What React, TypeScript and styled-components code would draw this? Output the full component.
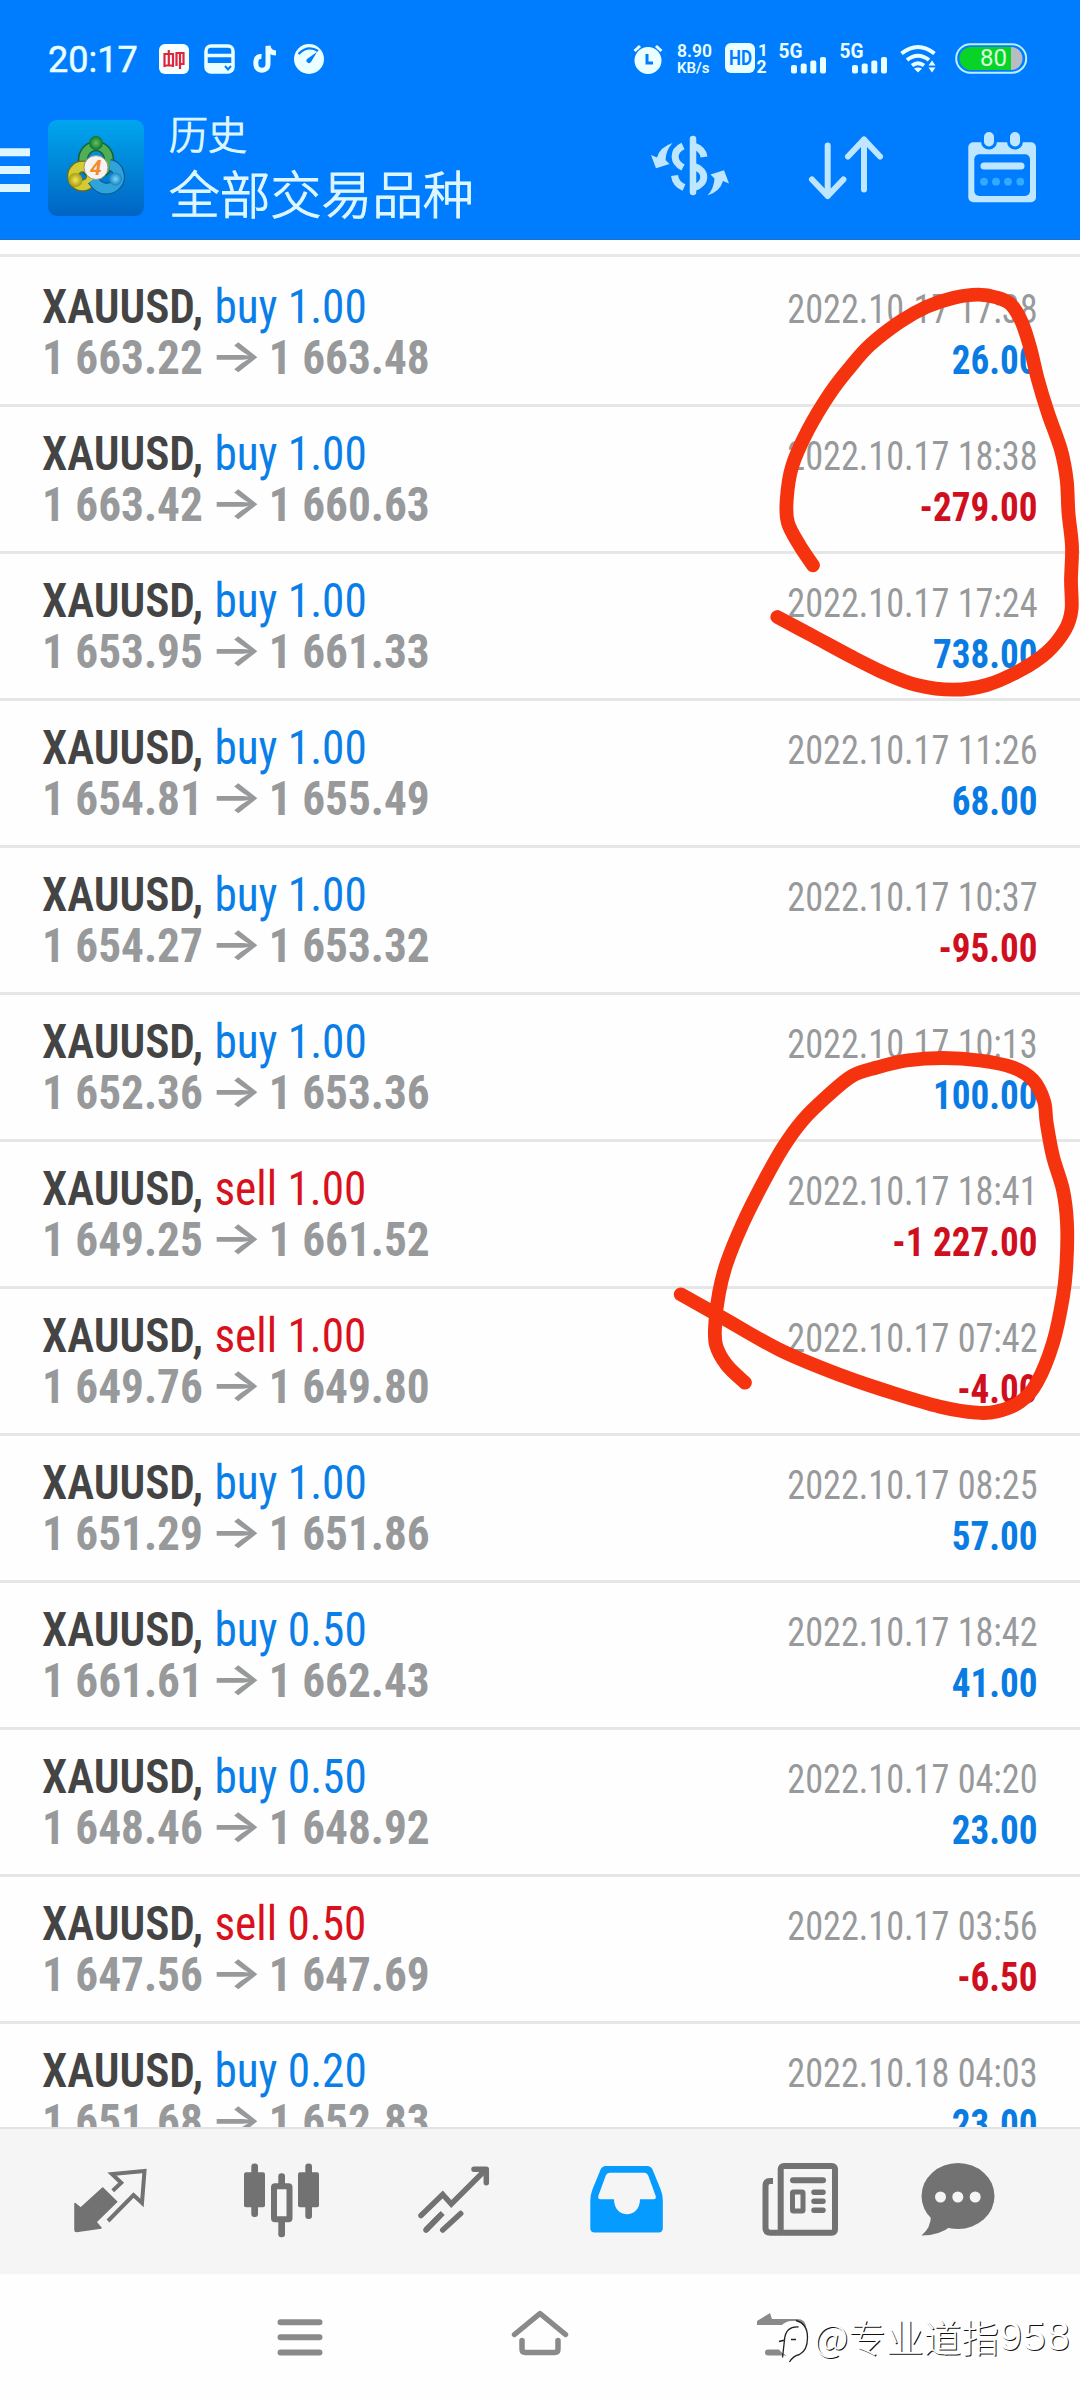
import React from "react";
import styled, { createGlobalStyle } from "styled-components";

const GlobalStyle = createGlobalStyle`
  * { box-sizing: border-box; }
  body { margin: 0; background: #fff; }
  svg { display: block; flex: none; overflow: visible; }
`;

const BLUE = "#007dff";
const ICE = "#def6ff";
const ICON = "#bfe6ff";
const GRAY = "#727272";
const NAV_GRAY = "#8a8a8a";

const Screen = styled.div`
  position: relative;
  width: 1080px;
  height: 2400px;
  overflow: hidden;
  display: flex;
  flex-direction: column;
  background: #fefefe;
  font-family: Roboto, "Noto Sans CJK SC", sans-serif;
`;

const Header = styled.header`
  height: 240px;
  flex: none;
  display: flex;
  flex-direction: column;
  background: ${BLUE};
  border-bottom: 1px solid #1a72cc;
`;

const StatusBar = styled.div`
  height: 117px;
  padding: 0 52px 0 48px;
  display: flex;
  align-items: center;
  justify-content: space-between;
  color: #eaffff;
`;

const StatusGroup = styled.div<{ $gap: number }>`
  display: flex;
  align-items: center;
  gap: ${(p) => p.$gap}px;
`;

const Clock = styled.span`
  width: 94px;
  margin-right: 2px;
  font-size: 36px;
  line-height: 42px;
  padding-top: 2px;
  -webkit-text-stroke: 0.5px #eaffff;
`;

const NetSpeed = styled.div`
  width: 36px;
  height: 34px;
  margin-right: -1px;
  display: flex;
  flex-direction: column;
  justify-content: space-between;
  font-weight: 600;
  white-space: nowrap;
`;

const SpeedValue = styled.span`
  font-size: 17.5px;
  line-height: 18px;
`;

const SpeedUnit = styled.span`
  font-size: 15px;
  line-height: 16px;
`;

const Toolbar = styled.div`
  flex: 1;
  display: flex;
  align-items: flex-start;
`;

const Titles = styled.div`
  width: 452px;
  margin-top: -4px;
  padding-left: 24px;
  display: flex;
  flex-direction: column;
  color: ${ICE};
  font-family: "Noto Sans CJK SC", sans-serif;
  font-weight: 300;
  -webkit-text-stroke: 1.1px ${ICE};
`;

const Subtitle = styled.span`
  font-size: 39px;
  line-height: 38px;
`;

const Title = styled.span`
  font-size: 50.8px;
  line-height: 60px;
  margin-top: 11px;
`;

const List = styled.main`
  height: 1887px;
  flex: none;
  overflow: hidden;
  background: #fefefe;
`;

const PreviousRow = styled.div`
  height: 17px;
  margin-bottom: 3px;
  border-bottom: 3px solid #e8e8e8;
`;

const Row = styled.div`
  height: 147px;
  border-bottom: 3px solid #e6e6e6;
  padding: 21px 42px 0 42px;
  display: flex;
  justify-content: space-between;
  font-stretch: 75%;
  white-space: nowrap;
`;

const Deal = styled.div`
  width: 430px;
  transform: scaleX(0.943);
  transform-origin: left;
  font-size: 48px;
  line-height: 51px;
`;

const Result = styled.div`
  padding-top: 3px;
  transform: scaleX(0.905);
  transform-origin: right;
  font-size: 40px;
  line-height: 51px;
  text-align: right;
`;

const Symbol = styled.div`
  font-weight: 620;
  color: #444;
`;

const Side = styled.span<{ $sell: boolean }>`
  margin-left: 1px;
  font-weight: 440;
  color: ${(p) => (p.$sell ? "#d9111c" : "#0a7ee8")};
`;

const Prices = styled.div`
  display: flex;
  font-weight: 700;
  color: #97999b;
`;

const Arrow = styled.span`
  width: 70px;
  height: 51px;
  flex: none;
  display: flex;
  justify-content: center;
  transform: scaleX(1.34);
  font-family: Inter, sans-serif;
  font-size: 44px;
  line-height: 47px;
  font-stretch: 100%;
  font-weight: 600;
`;

const Time = styled.div`
  color: #97999b;
`;

const Profit = styled.div<{ $loss: boolean }>`
  transform: scaleX(1.025);
  transform-origin: right;
  font-weight: 700;
  color: ${(p) => (p.$loss ? "#d00f1e" : "#0a7be2")};
`;

const TabBar = styled.nav`
  height: 147px;
  flex: none;
  display: flex;
  background: #f5f5f5;
  border-top: 2px solid #e2e2e2;
`;

const SystemNav = styled.footer`
  height: 126px;
  flex: none;
  display: flex;
  padding: 0 180px;
  background: #fefefe;
`;

const Marker = styled.svg`
  position: absolute;
  left: 0;
  top: 0;
  pointer-events: none;
`;

const Watermark = styled.div`
  position: absolute;
  left: 775px;
  top: 2312px;
  height: 52px;
  display: flex;
  align-items: center;
  color: #fff;
  font-family: "Noto Sans CJK SC", sans-serif;
  font-weight: 300;
  font-size: 37.7px;
  line-height: 52px;
  white-space: nowrap;
  text-shadow: 1px 1px 0 #111;
`;

const WatermarkText = styled.span`
  margin: -5px 0 0 4px;
`;

const WatermarkDigits = styled.span`
  margin: -5px 0 0 0;
  font-family: "Liberation Sans", sans-serif;
  font-size: 41px;
  letter-spacing: 1px;
`;

type Box = { x: number; y: number; w: number; h: number; children: React.ReactNode };

const Icon = ({ x, y, w, h, children }: Box) => (
  <svg width={w} height={h} viewBox={`${x} ${y} ${w} ${h}`} fill="none">
    {children}
  </svg>
);

const Signal = () => (
  <svg width="47" height="31" viewBox="0 0 47 31" fill="#eaffff">
    <text x="-0.5" y="14.5" fontSize="20" fontWeight="700" fontFamily="Roboto, sans-serif" textLength="24" lengthAdjust="spacingAndGlyphs">5G</text>
    <rect x="12" y="22" width="6" height="8.5" rx="2" />
    <rect x="21.7" y="20.5" width="6" height="10" rx="2" />
    <rect x="31.3" y="17.5" width="6" height="13" rx="2" />
    <rect x="41" y="14" width="6" height="16.5" rx="2" />
  </svg>
);

const StatusIcons = () => (
  <StatusBar>
    <StatusGroup $gap={15}>
      <Clock>20:17</Clock>
      <svg width="30" height="30" viewBox="0 0 30 30" fill="none">
        <rect width="30" height="30" rx="6" fill="#f8ffff" />
        <path d="M5.500 9v14M5.500 10h9M5.500 21.500h9M14 9v14M9.800 6v15.500M17.500 8v14M17.500 9h7v11h-3M21 8v17" stroke="#e0263c" strokeWidth="2.200" />
      </svg>
      <svg width="31" height="30" viewBox="0 0 31 30" fill="none">
        <rect x="2" y="2" width="27" height="26" rx="5" stroke="#eaffff" strokeWidth="3.500" />
        <path d="M2 11.500h27" stroke="#eaffff" strokeWidth="3.500" />
        <path d="M2 19h27v9H4z" fill="#eaffff" />
        <path d="M21 22l3 3.500 3-3.500" stroke={BLUE} strokeWidth="2" />
      </svg>
      <svg width="29" height="30" viewBox="0 0 29 30" fill="none">
        <path d="M11.500 12.500C6 12 5.500 17 6 21c.5 7 12 7 12-.5V2c.7 4.500 3.500 7 8 7" stroke="#eaffff" strokeWidth="5" />
      </svg>
      <svg width="30" height="30" viewBox="0 0 30 30" fill="none">
        <circle cx="15" cy="15" r="15" fill="#eaffff" />
        <path d="M4.500 10Q14 .5 24 7" stroke={BLUE} strokeWidth="2.200" />
        <path d="M23 8L13 15a2.500 2.500 0 1 0 4 3z" fill={BLUE} />
      </svg>
    </StatusGroup>
    <StatusGroup $gap={13.2}>
      <svg width="31" height="30" viewBox="0 0 31 30" fill="none">
        <circle cx="15" cy="16.500" r="13.500" fill="#eaffff" />
        <path d="M1.500 7L7 2M28.500 7L23 2" stroke="#eaffff" strokeWidth="3" />
        <path d="M14 10v9h6" stroke={BLUE} strokeWidth="3" />
      </svg>
      <NetSpeed>
        <SpeedValue>8.90</SpeedValue>
        <SpeedUnit>KB/s</SpeedUnit>
      </NetSpeed>
      <svg width="41" height="31" viewBox="0 0 41 31" fontFamily="Roboto, sans-serif" fontWeight="700">
        <rect width="30" height="30" rx="6" fill="#eaffff" />
        <text x="4" y="22" fontSize="19.500" fill={BLUE} textLength="23" lengthAdjust="spacingAndGlyphs">HD</text>
        <text x="33" y="12.500" fontSize="17" fill="#eaffff">1</text>
        <text x="31.500" y="30" fontSize="17.500" fill="#eaffff">2</text>
      </svg>
      <Signal />
      <Signal />
      <svg width="42" height="29" viewBox="0 0 42 29" fill="none" stroke="#eaffff" strokeWidth="4">
        <path d="M1.500 9.500Q18 -3.500 34.500 9.500M7 16Q18 7.500 29 16M12 21.500Q18 17 24 21.500" />
        <path d="M14 24.500q4-2 8 0L18 28.500z" fill="#eaffff" stroke="none" />
        <path d="M28.500 21.500l3.500-5 3.500 5zM28.500 23.500l3.500 5 3.500-5z" fill="#eaffff" stroke="none" />
      </svg>
      <svg width="73" height="31" viewBox="0 0 73 31">
        <defs>
          <clipPath id="cell"><rect x="4.500" y="4" width="63" height="23" rx="11.500" /></clipPath>
        </defs>
        <rect x="1.200" y="1.200" width="70" height="28.500" rx="14.200" fill="none" stroke="#bfefff" strokeWidth="2" />
        <g clipPath="url(#cell)">
          <rect x="4" y="3" width="52" height="26" fill="#0ad327" />
          <rect x="56" y="3" width="13" height="26" fill="#b9bcc2" />
        </g>
        <text x="25" y="22.500" fontSize="24" fill="#d8ffe2" fontFamily="Roboto, sans-serif" textLength="27" lengthAdjust="spacingAndGlyphs">80</text>
      </svg>
    </StatusGroup>
  </StatusBar>
);

const Logo = () => (
  <Icon x={48} y={117} w={97} h={100}>
    <defs>
      <linearGradient id="tile" x1="0" y1="0" x2="0" y2="1">
        <stop offset="0" stopColor="#00a6ee" />
        <stop offset="0.5" stopColor="#0085d8" />
        <stop offset="1" stopColor="#0064c4" />
      </linearGradient>
      <radialGradient id="green"><stop offset="0" stopColor="#5fc468" /><stop offset="1" stopColor="#12732b" /></radialGradient>
      <radialGradient id="yellow"><stop offset="0" stopColor="#f4e95a" /><stop offset="1" stopColor="#a89a10" /></radialGradient>
      <radialGradient id="cyan"><stop offset="0" stopColor="#7fd6f8" /><stop offset="1" stopColor="#1583c4" /></radialGradient>
    </defs>
    <rect x="48" y="120" width="96" height="96" rx="9" fill="url(#tile)" />
    <ellipse cx="96" cy="160" rx="13" ry="14" stroke="#14642a" strokeWidth="10.500" />
    <ellipse cx="96" cy="160" rx="13" ry="14" stroke="#4fae57" strokeWidth="7.500" />
    <circle cx="82.500" cy="176" r="9.500" stroke="#6f6d12" strokeWidth="12" />
    <circle cx="82.500" cy="176" r="9.500" stroke="#d3cb34" strokeWidth="9.500" />
    <path d="M93 180q8 12 19 7.500q11-6 5-18q-3-4-7-4.500" stroke="#0c5c96" strokeWidth="12" />
    <path d="M93 180q8 12 19 7.500q11-6 5-18q-3-4-7-4.500" stroke="#2fa3da" strokeWidth="9.500" />
    <circle cx="96" cy="143" r="7" fill="url(#green)" />
    <circle cx="75.500" cy="180" r="7" fill="url(#yellow)" />
    <circle cx="115.500" cy="179" r="6.500" fill="url(#cyan)" />
    <circle cx="96" cy="167.500" r="12" fill="#f6f4f2" stroke="#9a9484" strokeWidth="1" />
    <text x="90" y="175" fontSize="21" fontStyle="italic" fontWeight="700" fill="#f58a2c" fontFamily="Roboto, sans-serif">4</text>
  </Icon>
);

const AppToolbar = () => (
  <Toolbar>
    <Icon x={0} y={117} w={48} h={100}>
      <path d="M0 152.200h30M0 170h30M0 188h30" stroke={ICE} strokeWidth="8" />
    </Icon>
    <Logo />
    <Titles>
      <Subtitle>历史</Subtitle>
      <Title>全部交易品种</Title>
    </Titles>
    <Icon x={597} y={117} w={163} h={100}>
      <g stroke={ICON} strokeWidth="7">
        <path d="M693 139v53" strokeWidth="6.500" strokeLinecap="round" />
        <path d="M683 146C672.500 151 672.500 162 683 167.500M674.500 175.500Q675.500 184 684 187.500" />
        <path d="M694 146Q703 149 704 157M694 166.500C707 170 707 184 694 187.500" />
      </g>
      <g fill={ICON}>
        <path id="swap" d="M672.500 143Q660 147 657 157.500L651 155L656 168.300L669.500 164L665.500 160Q666 150 672.500 143z" />
        <use href="#swap" transform="rotate(180 690 169.300)" />
      </g>
    </Icon>
    <Icon x={760} y={117} w={160} h={100}>
      <g stroke={ICON} strokeWidth="6" strokeLinecap="round" strokeLinejoin="round">
        <path d="M827.700 145.500v50.500M812 179.500l15.700 16.500 15.700-16.500" />
        <path d="M864 189.500v-50M848 156.500l16-17 16 17" />
      </g>
    </Icon>
    <Icon x={920} y={117} w={160} h={100}>
      <rect x="968.300" y="142.300" width="67.700" height="60" rx="5" fill={ICON} />
      <rect x="974.300" y="154.300" width="55.700" height="41.700" rx="5" fill={BLUE} />
      <g fill={ICON} stroke={BLUE} strokeWidth="3">
        <rect x="982.500" y="130.500" width="13" height="17.500" rx="6.500" />
        <rect x="1008.500" y="130.500" width="13" height="17.500" rx="6.500" />
      </g>
      <path d="M984 166h37" stroke={ICON} strokeWidth="7" strokeLinecap="round" />
      <g fill="#33a9ff">
        <circle cx="984" cy="181.700" r="3.900" />
        <circle cx="996" cy="181.700" r="3.900" />
        <circle cx="1008" cy="181.700" r="3.900" />
        <circle cx="1020.300" cy="181.700" r="3.900" />
      </g>
    </Icon>
  </Toolbar>
);

type Trade = [side: string, open: string, close: string, time: string, profit: string];

const trades: Trade[] = [
  ["buy 1.00", "1 663.22", "1 663.48", "2022.10.17 17:38", "26.00"],
  ["buy 1.00", "1 663.42", "1 660.63", "2022.10.17 18:38", "-279.00"],
  ["buy 1.00", "1 653.95", "1 661.33", "2022.10.17 17:24", "738.00"],
  ["buy 1.00", "1 654.81", "1 655.49", "2022.10.17 11:26", "68.00"],
  ["buy 1.00", "1 654.27", "1 653.32", "2022.10.17 10:37", "-95.00"],
  ["buy 1.00", "1 652.36", "1 653.36", "2022.10.17 10:13", "100.00"],
  ["sell 1.00", "1 649.25", "1 661.52", "2022.10.17 18:41", "-1 227.00"],
  ["sell 1.00", "1 649.76", "1 649.80", "2022.10.17 07:42", "-4.00"],
  ["buy 1.00", "1 651.29", "1 651.86", "2022.10.17 08:25", "57.00"],
  ["buy 0.50", "1 661.61", "1 662.43", "2022.10.17 18:42", "41.00"],
  ["buy 0.50", "1 648.46", "1 648.92", "2022.10.17 04:20", "23.00"],
  ["sell 0.50", "1 647.56", "1 647.69", "2022.10.17 03:56", "-6.50"],
  ["buy 0.20", "1 651.68", "1 652.83", "2022.10.18 04:03", "23.00"],
];

const TradeRow = ({ trade: [side, open, close, time, profit] }: { trade: Trade }) => (
  <Row>
    <Deal>
      <Symbol>
        XAUUSD, <Side $sell={side.startsWith("sell")}>{side}</Side>
      </Symbol>
      <Prices>
        <span>{open}</span>
        <Arrow>→</Arrow>
        <span>{close}</span>
      </Prices>
    </Deal>
    <Result>
      <Time>{time}</Time>
      <Profit $loss={profit.startsWith("-")}>{profit}</Profit>
    </Result>
  </Row>
);

const Tabs = () => (
  <TabBar>
    <Icon x={0} y={2129} w={196} h={145}>
      <path d="M75 2203.500l5.700 4.500 22-20 14 13.700-20.700 20.300 5 6-24.500 3.500q-1.500 0-1.500-1.500z" fill={GRAY} stroke={GRAY} strokeWidth="1.500" strokeLinejoin="round" />
      <path d="M112.700 2190.700l8.500-8L112 2174l32.500-3-2.500 32-8.500-8-25.500 26" stroke={GRAY} strokeWidth="4" />
    </Icon>
    <Icon x={196} y={2129} w={171} h={145}>
      <g fill={GRAY}>
        <rect x="244" y="2172.300" width="21" height="35" rx="2" />
        <rect x="298" y="2172.300" width="21" height="35" rx="2" />
        <rect x="251.300" y="2163.500" width="6.700" height="53.500" rx="3" />
        <rect x="305.300" y="2163.500" width="6.700" height="55.500" rx="3" />
        <rect x="278.300" y="2173.300" width="6.700" height="64" rx="3" />
      </g>
      <rect x="274" y="2186.300" width="15.500" height="33" rx="1" fill="#f5f5f5" stroke={GRAY} strokeWidth="6" />
    </Icon>
    <Icon x={367} y={2129} w={173} h={145}>
      <g stroke={GRAY} strokeWidth="5.500" strokeLinecap="round" strokeLinejoin="round">
        <path d="M421 2215.500l21.700-21 8.600 9.500 34-34" strokeLinejoin="miter" />
        <path d="M474 2169.200h12.300v13.500" />
        <path d="M426 2230l16.700-17" strokeLinecap="butt" />
        <path d="M426 2230l14-14.300M442.700 2230l18-16.500" />
      </g>
    </Icon>
    <Icon x={540} y={2129} w={173} h={145}>
      <path fillRule="evenodd" d="M606 2166h41q4 0 5.500 3.500l8 19.500q2.300 6 2.300 11v28q0 4.500-4.500 4.500h-63.500q-4.500 0-4.500-4.500v-28q0-5 2.300-11l8-19.500q1.400-3.500 5.400-3.500zM610 2172.700q-3 0-4.300 3l-7.300 20q-.8 3.600 2 3.600h13.600c0 20 26 20 26 0h13.600q3 0 2-3.600l-7.300-20q-1.300-3-4.300-3z" fill="#069cff" />
    </Icon>
    <Icon x={713} y={2129} w={167} h={145}>
      <g stroke={GRAY} strokeWidth="6">
        <rect x="780.700" y="2166" width="54.300" height="66.700" rx="3" />
        <path d="M773 2181h-3q-4.500 0-4.500 5v42q0 4.700 5 4.700h12" />
        <path d="M793 2180.300h30" strokeLinecap="round" />
        <path d="M814 2192.300h9M814 2201.300h9M814 2210.300h9" strokeLinecap="round" strokeWidth="5.500" />
        <rect x="792.500" y="2192" width="10.500" height="19" rx="1" strokeWidth="5" />
      </g>
    </Icon>
    <Icon x={880} y={2129} w={200} h={145}>
      <ellipse cx="958" cy="2196" rx="36.500" ry="33" fill={GRAY} />
      <path d="M931 2215q0 13-9.500 20.500 18 0 29-9z" fill={GRAY} />
      <g fill="#f5f5f5">
        <circle cx="940.500" cy="2197" r="5.500" />
        <circle cx="957.800" cy="2197" r="5.500" />
        <circle cx="975.200" cy="2197" r="5.500" />
      </g>
    </Icon>
  </TabBar>
);

const SystemButtons = () => (
  <SystemNav>
    <Icon x={180} y={2274} w={240} h={126}>
      <path d="M280.500 2322.300h39M280.500 2337.300h39M280.500 2352.500h39" stroke={NAV_GRAY} strokeWidth="6" strokeLinecap="round" />
    </Icon>
    <Icon x={420} y={2274} w={240} h={126}>
      <g stroke={NAV_GRAY} strokeWidth="5.500" strokeLinecap="round" strokeLinejoin="round">
        <path d="M514.500 2334.500L540 2313.500l25.500 21" />
        <path d="M522 2340.500v8.500q0 3.500 3.500 3.500h29q3.500 0 3.500-3.500v-8.500" />
      </g>
    </Icon>
    <Icon x={660} y={2274} w={240} h={126}>
      <path d="M757 2325v-4l13-8 2 6h25q9 0 9 9v6h-6v-6q0-3-3-3z" fill={NAV_GRAY} />
      <path d="M768 2352.500h20" stroke={NAV_GRAY} strokeWidth="6" strokeLinecap="round" />
    </Icon>
  </SystemNav>
);

const firstLoop: number[][] = [
  [813, 565.3], [800, 546], [788, 523], [786.7, 500], [792, 466.7], [808, 430], [830, 393.3], [850, 367.3],
  [870, 345], [900, 321.7], [926.7, 306.7], [953, 298], [978, 294.7], [996.7, 297.5], [1011, 304.5], [1021.7, 322],
  [1030, 347], [1038, 380], [1048, 413], [1061, 450], [1066.7, 480], [1068.5, 513], [1072, 546.7], [1071, 580],
  [1071.5, 610], [1065, 630], [1046.7, 652.5], [1020, 670.5], [986.7, 685], [953, 689.7], [916.7, 685],
  [886.7, 674], [853, 657.5], [813, 636], [777.3, 617],
];

const secondLoop: number[][] = [
  [745, 1382.7], [726.7, 1365], [716, 1345], [715.3, 1323], [719, 1293], [726.7, 1263], [743, 1223], [763, 1183],
  [783, 1147.5], [803, 1120], [826.7, 1096.7], [852, 1076], [876.7, 1067.5], [906.7, 1060.5], [943, 1058],
  [980, 1060.5], [1013, 1067.5], [1033, 1080], [1044, 1101], [1046.7, 1123], [1053, 1156.7], [1063, 1190],
  [1067, 1223], [1066.5, 1263], [1063, 1296.7], [1053, 1343], [1036.7, 1383], [1020, 1402], [996.7, 1411.5],
  [976.7, 1412.7], [940, 1406.7], [893, 1393], [840, 1375], [780, 1350], [723, 1318], [680.7, 1294.3],
];

/* Catmull-Rom spline through the pen points, written as cubic segments. */
const smooth = (pts: number[][]) => {
  let d = `M${pts[0][0]} ${pts[0][1]}`;
  for (let i = 0; i < pts.length - 1; i++) {
    const a = pts[Math.max(i - 1, 0)];
    const b = pts[i];
    const c = pts[i + 1];
    const e = pts[Math.min(i + 2, pts.length - 1)];
    d += `C${b[0] + (c[0] - a[0]) / 6} ${b[1] + (c[1] - a[1]) / 6} ${c[0] - (e[0] - b[0]) / 6} ${c[1] - (e[1] - b[1]) / 6} ${c[0]} ${c[1]}`;
  }
  return d;
};

const PenMarks = () => (
  <Marker width="1080" height="2400" fill="none" stroke="#f5340f" strokeWidth="13.800" strokeLinecap="round" strokeLinejoin="round">
    <path d={smooth(firstLoop)} />
    <path d={smooth(secondLoop)} />
  </Marker>
);

export default function App() {
  return (
    <>
      <GlobalStyle />
      <Screen>
        <Header>
          <StatusIcons />
          <AppToolbar />
        </Header>
        <List>
          <PreviousRow />
          {trades.map((trade, i) => (
            <TradeRow key={i} trade={trade} />
          ))}
        </List>
        <Tabs />
        <SystemButtons />
        <PenMarks />
        <Watermark>
          <Icon x={775} y={2312} w={35} h={52}>
            <path d="M776 2338a16 18 0 0 1 16-17h5q10 2 10.500 16-.5 14-8 17-5 2-10 7l-2-5q-11-4-11.500-18z" fill="#fefefe" />
            <path d="M796 2320.500q11.500 3 11.500 17 0 13-8 17-6 1-10 7.500" stroke="#222" strokeWidth="1.300" />
            <path d="M798.500 2327q-13-1-14 13l-2 17.500M779 2341.500l6-1.500M791 2339.500h5" stroke="#222" strokeWidth="1.300" />
          </Icon>
          <WatermarkText>@专业道指</WatermarkText>
          <WatermarkDigits>958</WatermarkDigits>
        </Watermark>
      </Screen>
    </>
  );
}
